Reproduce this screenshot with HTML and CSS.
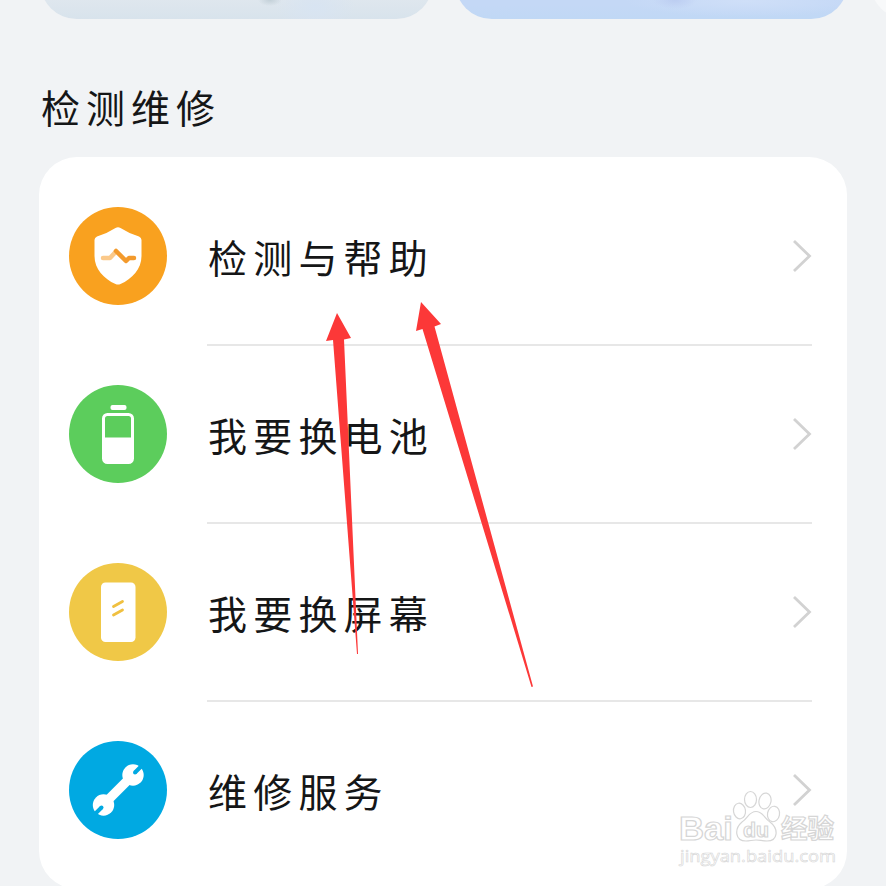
FILE: index.html
```html
<!DOCTYPE html>
<html lang="zh-CN">
<head>
<meta charset="utf-8">
<title>检测维修</title>
<link rel="stylesheet" href="styles.css">
</head>
<body>
<main class="screen">
  <section class="banners">
    <div class="banner banner-gray"></div>
    <div class="banner banner-blue"></div>
    <div class="banner banner-next"></div>
  </section>
  <h1 class="title">检测维修</h1>
  <ul class="card">
    <li class="row">
      <svg class="icon" viewBox="0 0 98 98">
        <circle cx="49" cy="49" r="49" fill="#f9a11f"/>
        <path d="M46.500 21Q49 19.500 51.500 21Q60 26.500 70 29.500Q72.500 30.500 72.500 33V49C72.500 62 63 72 51.500 77Q49 78 46.500 77C35 72 25.500 62 25.500 49V33Q25.500 30.500 28 29.500Q38 26.500 46.500 21Z" fill="#fff"/>
        <path d="M34 51H41L47 44.500" fill="none" stroke="#fbc98a" stroke-width="4.500" stroke-linecap="round" stroke-linejoin="round"/>
        <path d="M47 44L57 54L60 51H65" fill="none" stroke="#f39a2c" stroke-width="4.500" stroke-linecap="round" stroke-linejoin="round"/>
      </svg>
      <div class="body"><span class="label">检测与帮助</span><svg class="chevron" viewBox="0 0 20 34"><path d="M2 2L17.500 17L2 32"/></svg></div>
    </li>
    <li class="row">
      <svg class="icon" viewBox="0 0 98 98">
        <circle cx="49" cy="49" r="49" fill="#5ccd5c"/>
        <rect x="41.500" y="20" width="16" height="5" rx="2" fill="#fff"/>
        <rect x="34.500" y="29.500" width="29" height="48" rx="4" fill="none" stroke="#fff" stroke-width="3"/>
        <path d="M34.500 52.500H64V74Q64 78 60 78H38.500Q34.500 78 34.500 74Z" fill="#fff"/>
      </svg>
      <div class="body"><span class="label">我要换电池</span><svg class="chevron" viewBox="0 0 20 34"><path d="M2 2L17.500 17L2 32"/></svg></div>
    </li>
    <li class="row">
      <svg class="icon" viewBox="0 0 98 98">
        <circle cx="49" cy="49" r="49" fill="#f0c847"/>
        <rect x="32" y="19.500" width="34.500" height="59.500" rx="4.500" fill="#fff"/>
        <path d="M44.500 43.500L53.500 38.500M44.500 52L53.500 47" stroke="#f0c040" stroke-width="2.800" stroke-linecap="round"/>
      </svg>
      <div class="body"><span class="label">我要换屏幕</span><svg class="chevron" viewBox="0 0 20 34"><path d="M2 2L17.500 17L2 32"/></svg></div>
    </li>
    <li class="row">
      <svg class="icon" viewBox="0 0 98 98">
        <circle cx="49" cy="49" r="49" fill="#00a9e2"/>
        <path d="M36 62L62 36" stroke="#fff" stroke-width="9.500"/>
        <circle cx="34.500" cy="64" r="10.700" fill="#fff"/>
        <circle cx="64" cy="34" r="10.700" fill="#fff"/>
        <path d="M32.500 66.500L24 75M66 31.500L75 22.500" stroke="#00a9e2" stroke-width="4"/>
        <circle cx="32.500" cy="66.500" r="2" fill="#00a9e2"/>
        <circle cx="66" cy="31.500" r="2" fill="#00a9e2"/>
      </svg>
      <div class="body"><span class="label">维修服务</span><svg class="chevron" viewBox="0 0 20 34"><path d="M2 2L17.500 17L2 32"/></svg></div>
    </li>
  </ul>
  <svg class="arrows" viewBox="0 0 886 886">
    <path d="M337 313L351 338L344 339.500L358 654H357L333 340L326 341Z"/>
    <path d="M421 302L441 324L434.500 326.500L533 686.500L531.500 687L422.500 329L416 331Z"/>
  </svg>
  <svg class="watermark" viewBox="673 778 213 108">
    <g class="outline">
      <text class="brand" x="679" y="839.500" textLength="54" lengthAdjust="spacingAndGlyphs">Bai</text>
      <ellipse cx="739.500" cy="811" rx="6" ry="7.800" transform="rotate(-8 739.500 811)"/>
      <ellipse cx="750.500" cy="799.500" rx="6" ry="8"/>
      <ellipse cx="765" cy="801" rx="6" ry="8" transform="rotate(12 765 801)"/>
      <ellipse cx="773.500" cy="814" rx="6" ry="7.800" transform="rotate(10 773.500 814)"/>
      <path d="M756 811.500C763 811.500 764 818 770 822C779 829 778 841 767 841C762 841 760 840 756 840C752 840 750 841 746 841C735 841 734 829 742 822C748 818 749 811.500 756 811.500Z"/>
      <text class="paw-text" x="743" y="837" textLength="26" lengthAdjust="spacingAndGlyphs">du</text>
      <text class="brand-cn" x="781" y="838">经验</text>
    </g>
    <text class="site" x="680" y="861.500" textLength="156" lengthAdjust="spacingAndGlyphs">jingyan.baidu.com</text>
  </svg>
</main>
</body>
</html>
```

FILE: styles.css
```css
* { box-sizing: border-box; }
body {
  margin: 0;
  overflow: hidden;
  background: #f1f3f5;
  color: #151617;
  font-family: "Noto Sans CJK SC", sans-serif;
}
.screen {
  position: relative;
  width: 886px;
  height: 886px;
  overflow: hidden;
}
.banners {
  display: flex;
  align-items: flex-end;
  gap: 22px;
  height: 19px;
  padding-left: 40px;
  overflow: hidden;
}
.banner {
  flex: none;
  width: 393px;
  height: 100px;
  border-radius: 37px;
}
.banner-gray {
  background:
    radial-gradient(ellipse 12px 6px at 230px 81px, #c3d0d8, transparent),
    radial-gradient(ellipse 40px 26px at 275px 88px, #d8e4f2, transparent),
    linear-gradient(#dfe7ee 80%, #d8e3ec);
}
.banner-blue {
  background:
    radial-gradient(ellipse 22px 9px at 220px 81px, #bccdf1, transparent),
    radial-gradient(ellipse 120px 16px at 290px 82px, #cfdff8, transparent),
    linear-gradient(#c4d8f6 86%, #c0d8f5);
}
.banner-next {
  background: #f8f9fa;
}
.title {
  margin: 0;
  height: 138px;
  padding: 57px 0 0 41px;
  font-size: 39px;
  font-weight: 400;
  line-height: 60px;
  letter-spacing: 6px;
}
.card {
  width: 808px;
  height: 732px;
  margin: 0 0 0 39px;
  padding: 10px 35px 12px 30px;
  border-radius: 38px;
  background: #fff;
  list-style: none;
}
.row {
  display: flex;
  align-items: center;
  gap: 40px;
  height: 178px;
}
.icon {
  flex: none;
  width: 98px;
  height: 98px;
}
.body {
  display: flex;
  flex: 1;
  align-items: center;
  justify-content: space-between;
  height: 180px;
  padding-top: 2px;
  border-bottom: 2px solid #e7e7e7;
}
.row:last-child .body { border-bottom-color: transparent; }
.label {
  padding-left: 1px;
  font-size: 39px;
  font-weight: 400;
  line-height: 60px;
  letter-spacing: 6.200px;
}
.chevron {
  width: 20px;
  height: 34px;
  fill: none;
  stroke: #d2d2d2;
  stroke-width: 2.800;
}
.arrows {
  position: absolute;
  inset: 0;
  width: 886px;
  height: 886px;
  fill: #fc3838;
}
.watermark {
  position: absolute;
  top: 778px;
  left: 673px;
  width: 213px;
  height: 108px;
  fill: #fff;
  stroke: #d6d6d6;
}
.outline { stroke-width: 1.200; }
.brand {
  font: bold 33px "Liberation Sans", sans-serif;
}
.paw-text {
  font: bold 21px "Liberation Sans", sans-serif;
}
.brand-cn {
  font: bold 26.500px "Noto Sans CJK SC", sans-serif;
}
.site {
  font: 17px "Open Sans", sans-serif;
  stroke-width: 0.600;
}
```
